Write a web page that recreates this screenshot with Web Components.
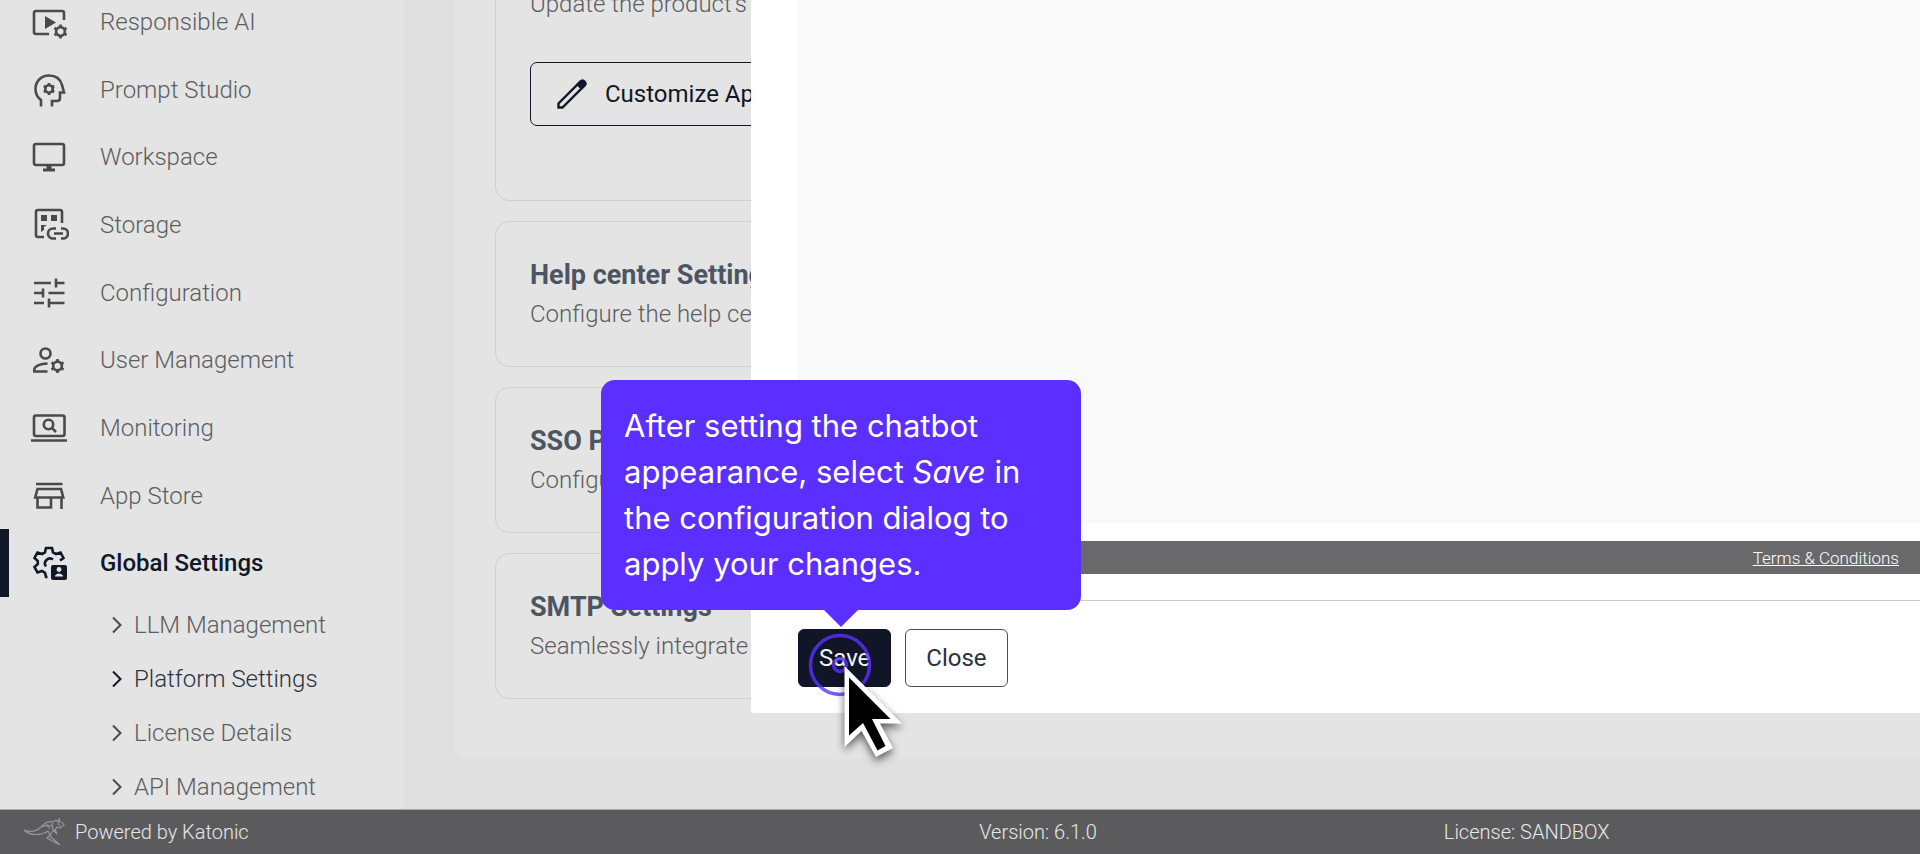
<!DOCTYPE html>
<html lang="en">
<head>
<meta charset="utf-8">
<title>Platform Settings</title>
<style>
  :root {
    --navy: #101828;
    --surface: #e4e4e4;
    --backdrop: #dfdfdf;
    --muted: #5c5d60;
    --accent: #5b2fff;
  }
  body {
    margin: 0;
    font-family: Roboto, "Liberation Sans", sans-serif;
    font-size: 24px;
    font-weight: 300;
    color: var(--muted);
    background: var(--backdrop);
  }
</style>
</head>
<body>
<app-shell>
  <side-nav slot="nav">
    <nav-item icon="responsible">Responsible AI</nav-item>
    <nav-item icon="prompt">Prompt Studio</nav-item>
    <nav-item icon="workspace">Workspace</nav-item>
    <nav-item icon="storage">Storage</nav-item>
    <nav-item icon="config">Configuration</nav-item>
    <nav-item icon="users">User Management</nav-item>
    <nav-item icon="monitoring">Monitoring</nav-item>
    <nav-item icon="store">App Store</nav-item>
    <nav-item icon="settings" active>Global Settings</nav-item>
    <nav-sub-item slot="sub">LLM Management</nav-sub-item>
    <nav-sub-item slot="sub" active>Platform Settings</nav-sub-item>
    <nav-sub-item slot="sub">License Details</nav-sub-item>
    <nav-sub-item slot="sub">API Management</nav-sub-item>
  </side-nav>
  <settings-card>
    <span slot="description">Update the product's</span>
    <outline-button>Customize App</outline-button>
  </settings-card>
  <settings-card heading="Help center Settings"><span slot="description">Configure the help center</span></settings-card>
  <settings-card heading="SSO P"><span slot="description">Configu</span></settings-card>
  <settings-card heading="SMTP Settings"><span slot="description">Seamlessly integrate</span></settings-card>
  <config-dialog slot="dialog"></config-dialog>
  <guide-tip slot="tip">After setting the chatbot appearance, select <em>Save</em> in the configuration dialog to apply your changes.</guide-tip>
  <app-footer slot="footer"></app-footer>
</app-shell>

<script>
// six-toothed cog used inside several of the nav icons
function cog(cx, cy, r) {
  let teeth = '';
  for (let i = 0; i < 6; i++) {
    const a = Math.PI / 3 * i + Math.PI / 2;
    const x = Math.cos(a);
    const y = Math.sin(a);
    teeth += `M${cx + x * r * 0.7} ${cy + y * r * 0.7}L${cx + x * r} ${cy + y * r}`;
  }
  return `<circle cx="${cx}" cy="${cy}" r="${r * 0.62}"/><path d="${teeth}"/>`;
}

const icons = {
  responsible: `
    <path d="M20 32H7Q5 32 5 30V11Q5 9 7 9H33Q35 9 35 11V18"/>
    <path class="fill" d="M16 14V27L27 20.500Z"/>${cog(31.5, 29.5, 7)}`,
  prompt: `
    <path d="M12 36.500V30C8 27 6.500 23 6.500 19C6.500 11 12.500 5.500 20 5.500C27 5.500 31.500 9.500 33 15L35 22.500H31V28Q31 31 28 31H23V36.500"/>${cog(20, 19, 6)}`,
  workspace: `
    <rect x="5" y="7" width="30" height="21" rx="2"/>
    <path class="fill" d="M17.500 28H22.500V31.500H26V34.500H14V31.500H17.500Z"/>`,
  storage: `
    <path d="M15 32H9Q7 32 7 30V7Q7 5 9 5H31Q33 5 33 7V18"/>
    <path class="fill" d="M12 10h6v6h-6zM22 10h6v6h-6zM12 20h6l-3 2v3l-3 2z"/>
    <path d="M27 23.500H24A5 5 0 0 0 24 33.500H27M32 23.500H34A5 5 0 0 1 34 33.500H32M25 28.500H34"/>`,
  config: `
    <path d="M5 10H22M27 5.500V14.500M27 10H35.500M5 20H14M14 15.500V24.500M19.500 20H35.500M5 30H15M20 25.500V34.500M20 30H35.500"/>`,
  users: `
    <circle cx="16.500" cy="13.500" r="5"/>
    <path d="M18.500 23.500C11 23.500 5.300 26.500 5.300 29.500V31.500H18.500"/>${cog(28.5, 26, 7)}`,
  monitoring: `
    <rect x="5" y="7.500" width="30.500" height="20.500" rx="2"/>
    <path d="M2 32.500H38M23 20L27 24"/><circle cx="19.500" cy="16.500" r="4.700"/>`,
  store: `
    <path d="M7 8H33.500M8.500 13H32L34.300 21.500H6.200ZM8.500 21.500V31.500H22V21.500M32.500 21.500V33"/>`,
  settings: `
    <path d="M31 17.500L34.500 15L31.500 9.500L27 11L24 9.300L23 5H17L16 9.300L13 11L8.500 9.500L5.500 15L8.800 18V21L5.500 24L8.500 29.500L13 28L16 29.800L17 34H18.500M17 23.500A5 5 0 0 1 24 16.500"/>
    <rect class="fill" x="22" y="22" width="16" height="15" rx="2"/>
    <circle cx="30" cy="26.500" r="2.400" style="fill:#e4e4e4;stroke:none"/>
    <path d="M26 33.500V32.500Q30 28.500 34 32.500V33.500Z" style="fill:#e4e4e4;stroke:none"/>`
};

class BaseElement extends HTMLElement {
  constructor() {
    super();
    this.attachShadow({mode: 'open'});
  }

  connectedCallback() {
    this.shadowRoot.innerHTML = this.render();
  }
}

class AppShell extends BaseElement {
  render() {
    return `
      <style>
        :host {
          position: relative;
          display: grid;
          grid-template: minmax(0, 1fr) 45px / 404px minmax(0, 1fr);
          height: 100vh;
          overflow: hidden;
        }
        main {
          display: flex;
          flex-direction: column;
          padding: 0 0 50px 50px;
          overflow: hidden;
        }
        .panel {
          flex: 1;
          min-height: 0;
          box-sizing: border-box;
          display: flex;
          flex-direction: column;
          justify-content: flex-end;
          gap: 20px;
          padding: 0 40px 60px 41px;
          border-radius: 0 0 0 16px;
          background: var(--surface);
        }
        .footer {
          grid-column: 1 / -1;
        }
      </style>
      <slot name="nav"></slot>
      <main><div class="panel"><slot></slot></div></main>
      <div class="footer"><slot name="footer"></slot></div>
      <slot name="dialog"></slot>
      <slot name="tip"></slot>
    `;
  }
}

class SideNav extends BaseElement {
  render() {
    return `
      <style>
        :host {
          display: flex;
          flex-direction: column;
          background: var(--surface);
          overflow: hidden;
        }
        nav {
          flex: 1;
          display: flex;
          flex-direction: column;
          margin-top: -12px;
        }
        .sub {
          height: 211px;
          padding-top: 1px;
          overflow: hidden;
        }
      </style>
      <nav><slot></slot></nav>
      <div class="sub"><slot name="sub"></slot></div>
    `;
  }
}

class NavItem extends BaseElement {
  render() {
    return `
      <style>
        :host {
          flex: 1;
          display: flex;
        }
        a {
          flex: 1;
          display: flex;
          align-items: center;
          gap: 31px;
          padding-left: 29px;
          color: inherit;
          text-decoration: none;
        }
        svg {
          width: 40px;
          height: 40px;
          fill: none;
          stroke: #4a4a4c;
          stroke-width: 2.6;
        }
        .fill {
          fill: #4a4a4c;
          stroke: none;
        }
        :host([active]) a {
          padding-left: 20px;
          border-left: 9px solid var(--navy);
          color: var(--navy);
          font-weight: 500;
        }
        :host([active]) svg {
          stroke: var(--navy);
        }
        :host([active]) .fill {
          fill: var(--navy);
        }
      </style>
      <a href="#">
        <svg viewBox="0 0 40 40" aria-hidden="true">${icons[this.getAttribute('icon')]}</svg>
        <span><slot></slot></span>
      </a>
    `;
  }
}

class NavSubItem extends BaseElement {
  render() {
    return `
      <style>
        :host {
          display: block;
        }
        a {
          display: flex;
          align-items: center;
          gap: 10px;
          height: 54px;
          padding-left: 110px;
          color: inherit;
          text-decoration: none;
        }
        svg {
          width: 14px;
          height: 18px;
          fill: none;
          stroke: #4a4a4c;
          stroke-width: 2;
        }
        :host([active]) a {
          color: #2b3140;
        }
        :host([active]) svg {
          stroke: var(--navy);
        }
      </style>
      <a href="#">
        <svg viewBox="0 0 14 18" aria-hidden="true"><path d="M3 1.500L10.500 9L3 16.500"/></svg>
        <span><slot></slot></span>
      </a>
    `;
  }
}

class SettingsCard extends BaseElement {
  render() {
    const heading = this.getAttribute('heading');
    return `
      <style>
        :host {
          display: block;
          flex-shrink: 0;
          border: 1px solid #d0d0d0;
          border-radius: 14px;
          padding: 34px;
          white-space: nowrap;
        }
        h2 {
          margin: 0 0 2px;
          font-size: 27px;
          line-height: 38px;
          font-weight: 700;
          color: #4b5563;
        }
        p {
          margin: 0;
          line-height: 36px;
        }
      </style>
      ${heading ? `<h2>${heading}</h2>` : ''}
      <p><slot name="description"></slot></p>
      <slot></slot>
    `;
  }
}

class OutlineButton extends BaseElement {
  render() {
    return `
      <style>
        :host {
          display: block;
          padding: 40px 0;
        }
        button {
          display: flex;
          align-items: center;
          gap: 16px;
          height: 64px;
          padding: 0 24px;
          border: 1px solid var(--navy);
          border-radius: 7px;
          background: none;
          font: inherit;
          font-weight: 400;
          color: var(--navy);
        }
        svg {
          width: 34px;
          height: 34px;
          fill: none;
          stroke: currentColor;
          stroke-width: 2.4;
        }
      </style>
      <button type="button">
        <svg viewBox="0 0 34 34" aria-hidden="true">
          <path d="M3.500 30.500V26.500L25 5L29 9L7.500 30.500Z"/>
          <path d="M21 7.500L25.500 3Q27.500 1.500 29.500 3L31 4.500Q32.500 6.500 31 8.500L26.500 13Z" fill="currentColor" stroke="none"/>
        </svg>
        <slot></slot>
      </button>
    `;
  }
}

class ConfigDialog extends BaseElement {
  render() {
    return `
      <style>
        :host {
          position: absolute;
          inset: 0 0 141px 751px;
          display: flex;
          flex-direction: column;
          border-radius: 0 0 0 3px;
          background: #fff;
        }
        .preview {
          flex: 1;
          margin-left: 47px;
          background: #f9f9f9;
        }
        .terms {
          display: flex;
          justify-content: flex-end;
          align-items: center;
          height: 33px;
          margin: 18px 0 26px 47px;
          padding-right: 21px;
          background: #69696b;
          font-size: 17px;
        }
        a {
          color: #fff;
        }
        .actions {
          display: flex;
          gap: 14px;
          padding: 28px 47px 26px;
          border-top: 1px solid #ccc;
        }
        button {
          height: 58px;
          padding: 0 20px;
          border: 1px solid #4a4f5c;
          border-radius: 6px;
          background: #fff;
          font: inherit;
          font-weight: 400;
          color: #2b3140;
        }
        .save {
          border-color: #101628;
          background: #101628;
          color: #f4f4f6;
        }
      </style>
      <div class="preview"></div>
      <div class="terms"><a href="#">Terms &amp; Conditions</a></div>
      <div class="actions">
        <button class="save" type="button">Save</button>
        <button type="button">Close</button>
      </div>
    `;
  }
}

class GuideTip extends BaseElement {
  render() {
    return `
      <style>
        :host {
          position: absolute;
          left: 601px;
          bottom: 244px;
          box-sizing: border-box;
          width: 480px;
          padding: 23px;
          border-radius: 14px;
          background: var(--accent);
          color: #fff;
          font: 400 31px/46px Inter, sans-serif;
        }
        svg {
          position: absolute;
          left: 200px;
          top: 100%;
          width: 110px;
          height: 160px;
          overflow: visible;
        }
        circle {
          fill: none;
          stroke: var(--accent);
          stroke-opacity: .8;
          stroke-width: 3.5;
        }
        .pointer {
          filter: drop-shadow(0 4px 4px rgba(0, 0, 0, .6));
        }
      </style>
      <slot></slot>
      <svg viewBox="0 0 110 160" aria-hidden="true">
        <path d="M22 -1H58L40 17Z" fill="#5b2fff"/>
        <circle cx="39" cy="55" r="29.500"/>
        <circle cx="39" cy="55" r="6.500"/>
        <g class="pointer">
          <path d="M43.500 56L101 113.500H79L92 138L75 147L60.500 121L43.500 137Z" fill="#fff"/>
          <path d="M48 67.500L89.500 109H71L84.500 136L76.500 140.500L62 113L48 125.500Z" fill="#000"/>
        </g>
      </svg>
    `;
  }
}

class AppFooter extends BaseElement {
  render() {
    return `
      <style>
        :host {
          box-sizing: border-box;
          display: grid;
          grid-template-columns: 255fr 121fr 124fr;
          align-items: center;
          height: 45px;
          border-top: 1px solid #aaa;
          background: #5b5b5d;
          color: #e8e8e8;
          font-size: 20px;
        }
        .brand {
          display: flex;
          align-items: center;
          gap: 9px;
          padding-left: 22px;
        }
        svg {
          width: 44px;
          height: 30px;
          fill: none;
          stroke: #97979a;
          stroke-width: 1.2;
        }
      </style>
      <div class="brand">
        <svg viewBox="0 0 44 30" aria-hidden="true">
          <path d="M2 13Q12 17 19 10Q25 3 31 5L34 3L36 5L37 2L38 5Q42 6 42 8L38 11L35 10Q34 13 30 15L28 19L38 28M2 13Q8 19 19 17Q24 16 26 14M26 14L28 18L25 21L36 27M19 10Q25 8 30 9M24 7L28 12M30 6L31 13L35 17L33 12M36 6L38 9"/>
        </svg>
        <span>Powered by Katonic</span>
      </div>
      <span>Version: 6.1.0</span>
      <span>License: SANDBOX</span>
    `;
  }
}

customElements.define('app-shell', AppShell);
customElements.define('side-nav', SideNav);
customElements.define('nav-item', NavItem);
customElements.define('nav-sub-item', NavSubItem);
customElements.define('settings-card', SettingsCard);
customElements.define('outline-button', OutlineButton);
customElements.define('config-dialog', ConfigDialog);
customElements.define('guide-tip', GuideTip);
customElements.define('app-footer', AppFooter);
</script>
</body>
</html>
